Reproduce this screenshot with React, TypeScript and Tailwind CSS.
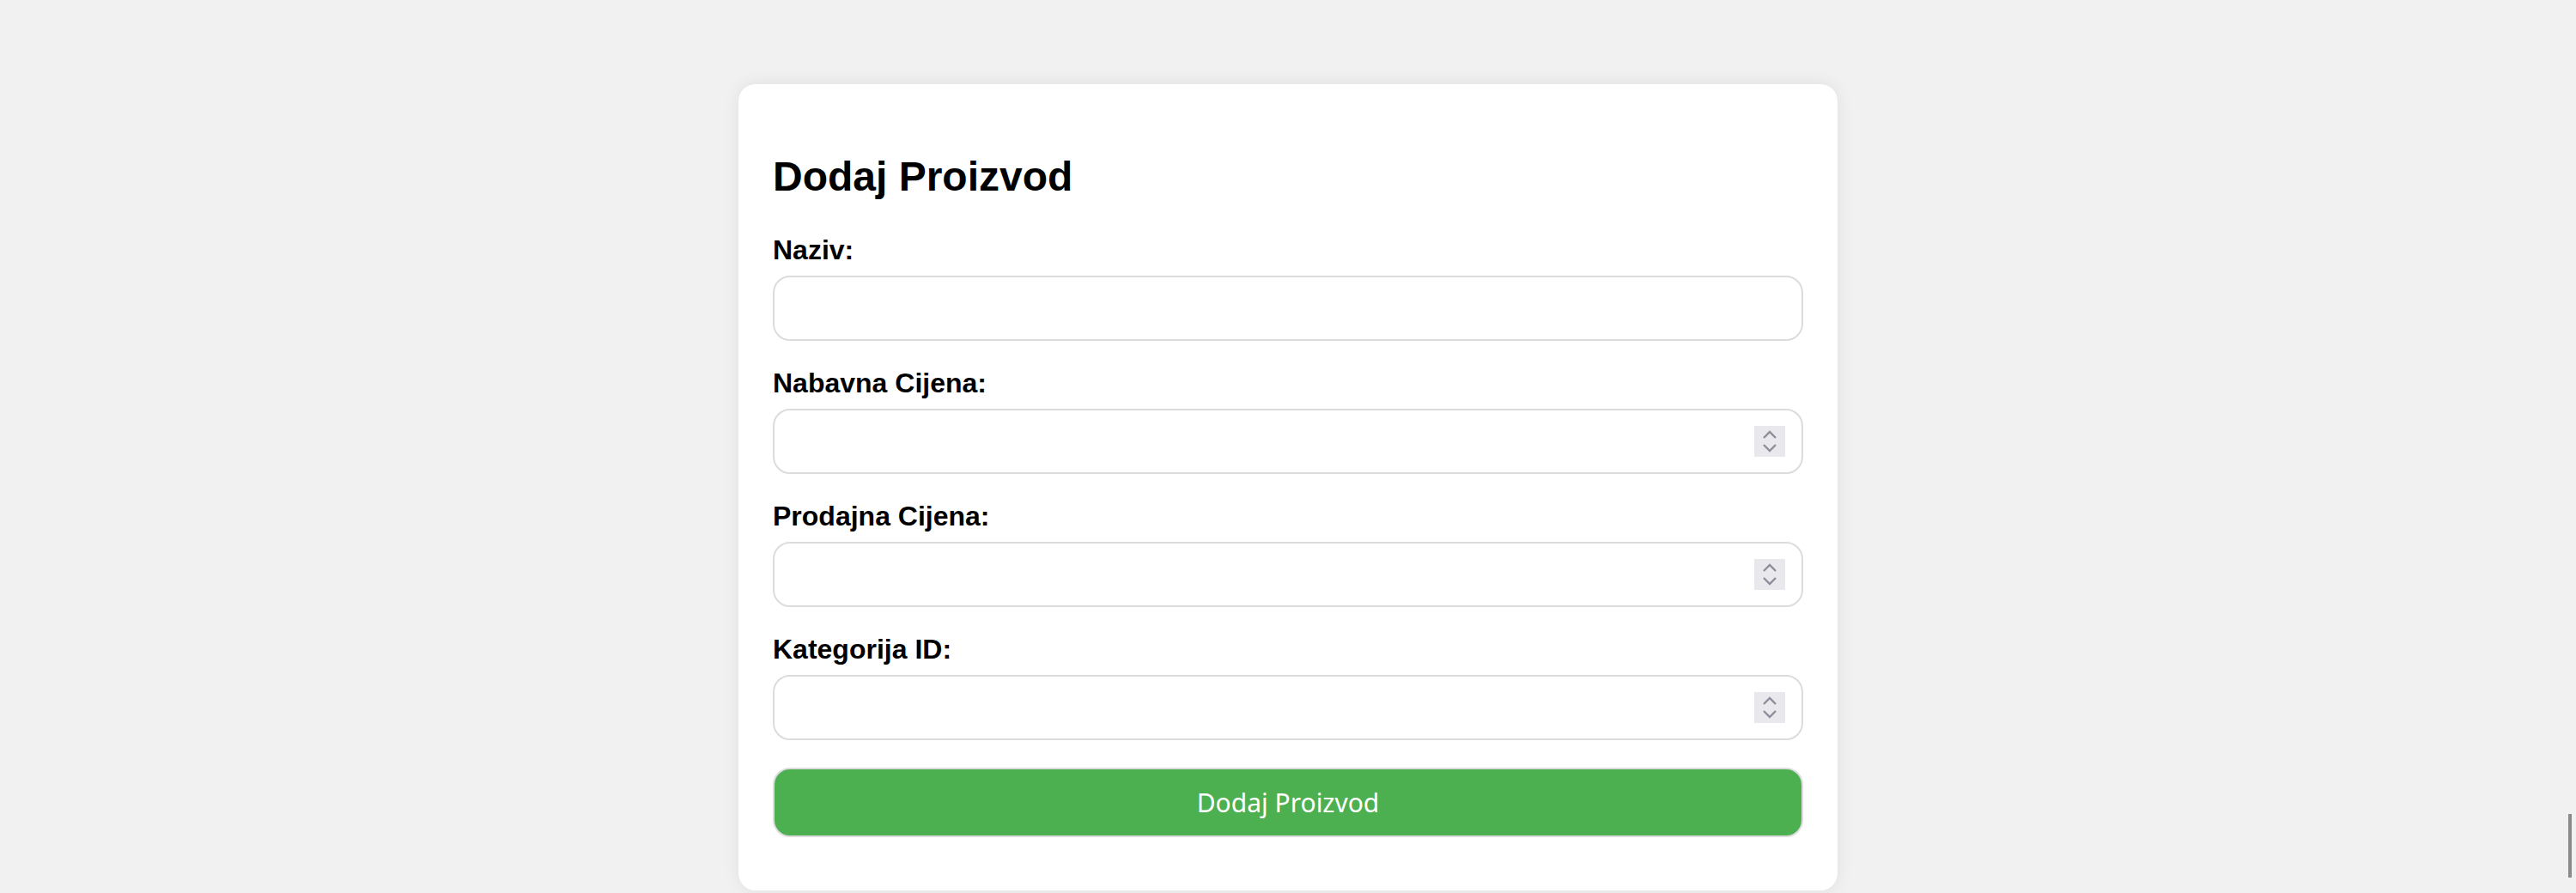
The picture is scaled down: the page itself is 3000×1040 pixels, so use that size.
const Spinner = () => {
  return (
    <div className="w-[36px] h-[36px] bg-[#e9e9ed] shrink-0">
      <svg width="36" height="36" viewBox="0 0 36 36" fill="none">
        <path d="M11 14 L18 7 L25 14" stroke="#8f8d9b" strokeWidth="2.4" />
        <path d="M11 22 L18 29 L25 22" stroke="#8f8d9b" strokeWidth="2.4" />
      </svg>
    </div>
  );
};

const Field = ({ label, number, last }: { label: string; number?: boolean; last?: boolean }) => {
  return (
    <div className={last ? "" : "mb-[31px]"}>
      <label className="block text-[32px] leading-[37px] font-bold text-black mb-[11px]">{label}</label>
      <div className="flex items-center h-[76px] border-2 border-[#dcdcdc] rounded-[20px] bg-white pl-[18px] pr-[19px]">
        <input type="text" className="flex-1 h-full outline-none bg-transparent text-[32px]" />
        {number && <Spinner />}
      </div>
    </div>
  );
};

const App = () => {
  return (
    <div
      className="relative h-[1040px] overflow-hidden bg-[#f1f1f1] pt-[98px]"
      style={{ fontFamily: '"Liberation Sans", Arial, sans-serif' }}
    >
      <div className="w-[1280px] mx-auto bg-white rounded-[20px] shadow-[0_0_20px_rgba(0,0,0,0.08)] px-[40px] pt-[80px] pb-[62px]">
        <h2 className="text-[48px] leading-[55px] font-bold text-black mb-[40px]">Dodaj Proizvod</h2>
        {/* forma za proizvod */}
        <form action="#">
          <Field label="Naziv:" />
          <Field label="Nabavna Cijena:" number />
          <Field label="Prodajna Cijena:" number />
          <Field label="Kategorija ID:" number last />
          <button
            type="button"
            className="mt-[32px] w-full h-[81px] flex items-center justify-center bg-[#4caf50] border-2 border-[#dcdcdc] rounded-[20px] text-white text-[30px]"
            style={{ fontFamily: '"Noto Sans", sans-serif' }}
          >
            Dodaj Proizvod
          </button>
        </form>
      </div>
      <div className="fixed right-[5px] bottom-[18px] w-[4px] h-[74px] bg-[#8a8a8a]" />
    </div>
  );
};

export default App;
